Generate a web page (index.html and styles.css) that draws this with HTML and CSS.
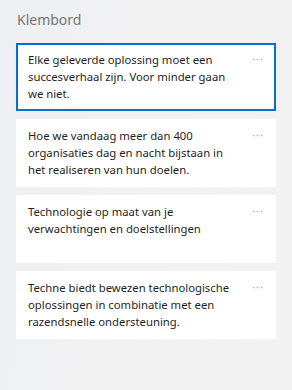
FILE: index.html
```html
<!DOCTYPE html>
<html lang="nl">
<head>
  <meta charset="UTF-8" />
  <title>Klembord</title>
  <meta name="viewport" content="width=device-width, initial-scale=1.0">
  <link rel="stylesheet" href="styles.css">
</head>
<body>

<div class="panel">
  <h1 class="title">Klembord</h1>

  <ul class="clips">
    <li class="clip selected">
      <p>Elke geleverde oplossing moet een succesverhaal zijn. Voor minder gaan we niet.</p>
      <span class="more">&middot;&middot;&middot;</span>
    </li>
    <li class="clip">
      <p>Hoe we vandaag meer dan 400 organisaties dag en nacht bijstaan in het realiseren van hun doelen.</p>
      <span class="more">&middot;&middot;&middot;</span>
    </li>
    <li class="clip">
      <p>Technologie op maat van je verwachtingen en doelstellingen</p>
      <span class="more">&middot;&middot;&middot;</span>
    </li>
    <li class="clip">
      <p>Techne biedt bewezen technologische oplossingen in combinatie met een razendsnelle ondersteuning.</p>
      <span class="more">&middot;&middot;&middot;</span>
    </li>
  </ul>
</div>

</body>
</html>
```

FILE: styles.css
```css
html, body {
  margin: 0;
  height: 100%;
}
body {
  font-family: "Segoe UI", "Noto Sans", Arial, sans-serif;
  background: linear-gradient(100deg, #edeff2 0%, #f1f1f2 40%, #f2f2f2 100%);
}
.panel {
  padding: 9px 16px 0 16px;
}
.title {
  margin: 0 0 0 1px;
  font-size: 14px;
  font-weight: normal;
  color: #757575;
  line-height: 22px;
}
.clips {
  list-style: none;
  margin: 12px 0 0 0;
  padding: 0;
  display: flex;
  flex-direction: column;
  gap: 8px;
}
.clip {
  display: flex;
  justify-content: space-between;
  box-sizing: border-box;
  height: 68px;
  padding: 8px 12px 0 12px;
  background: #ffffff;
}
.clip.selected {
  border: 2px solid #0a6ed1;
  padding: 6px 10px 0 10px;
}
.clip p {
  margin: 0;
  width: 206px;
  font-size: 11.3px;
  line-height: 17px;
  color: #1f1f1f;
}
.more {
  margin-top: 3px;
  font-size: 11px;
  line-height: 10px;
  color: #a0a0a0;
  letter-spacing: 1px;
}
```
